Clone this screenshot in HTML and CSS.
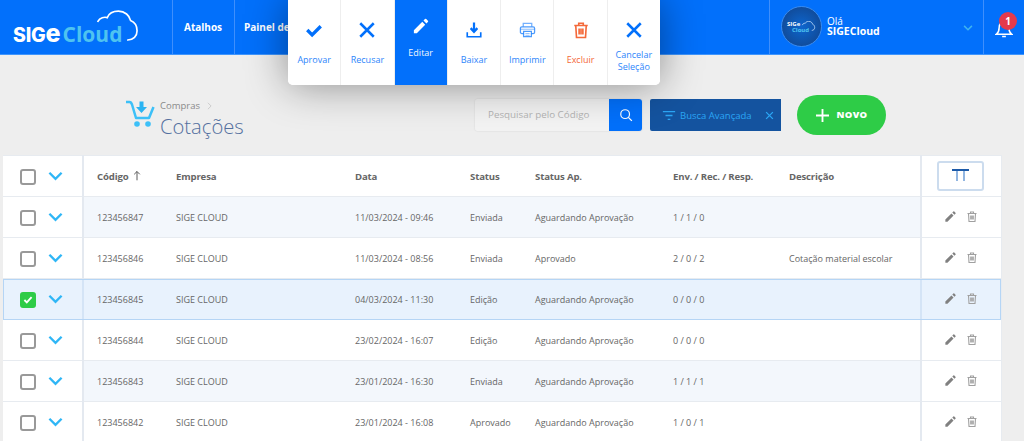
FILE: index.html
```html
<!DOCTYPE html>
<html lang="pt-BR">
<head>
<meta charset="utf-8">
<title>Cotações</title>
<link rel="stylesheet" href="styles.css">
</head>
<body>
<svg class="defs" width="0" height="0" aria-hidden="true">
  <symbol id="i-pencil" viewBox="0 0 24 24"><path d="M2.500 17.600V21.500h3.900L17.600 10.300l-3.900-3.900zM19.200 8.700l2-2a1.200 1.200 0 0 0 0-1.700l-2.200-2.200a1.200 1.200 0 0 0-1.700 0l-2 2z" fill="currentColor"/></symbol>
  <symbol id="i-trash" viewBox="0 0 24 24"><path d="M3 6h18M9 6V3h6V6M5 6l1 16h12L19 6M9.500 10v8M12 10v8M14.500 10v8" fill="none" stroke="currentColor" stroke-width="2.200"/></symbol>
  <symbol id="i-x" viewBox="0 0 24 24"><path d="M3 3l18 18M21 3L3 21" fill="none" stroke="currentColor" stroke-width="3.400"/></symbol>
  <symbol id="i-chev" viewBox="0 0 16 10"><path d="M1.500 1.500L8 8l6.500-6.500" fill="none" stroke="currentColor" stroke-width="2.500"/></symbol>
</svg>

<header class="topbar">
  <div class="logo">
    <span class="logo-sig">SIG</span><span class="logo-e">e</span><span class="logo-cloud">Cloud</span>
    <svg class="logo-arc" viewBox="0 0 44 34"><path d="M1 12C3 8 8 7 11 8 13 3 18 1 23 1c7 0 12 5 13 10 5 2 7 6 7 11 0 6-4 10-10 10" fill="none" stroke="#fff" stroke-width="1.800" stroke-linecap="round"/></svg>
  </div>
  <nav class="nav">
    <a class="nav-item">Atalhos</a>
    <a class="nav-item">Painel de Controle</a>
  </nav>
  <div class="user">
    <div class="avatar">
      <span class="av-a">SIGe</span><span class="av-b">Cloud</span>
      <svg class="av-arc" viewBox="0 0 44 34"><path d="M1 14C3 8 8 7 11 8 13 3 18 1 23 1c7 0 12 5 13 10 5 2 7 6 7 11 0 6-4 10-10 10" fill="none" stroke="#cfe6ff" stroke-width="2.500"/></svg>
    </div>
    <div class="user-text"><span class="hello">Olá</span><strong class="uname">SIGECloud</strong></div>
    <svg class="user-chev"><use href="#i-chev"/></svg>
  </div>
  <div class="bell">
    <svg class="bell-ico" viewBox="0 0 24 24"><path d="M2 19.500h20c-2.500-2-3.500-3.500-3.500-8.500 0-4.500-2.500-7.500-6.500-7.500S5.500 6.500 5.500 11c0 5-1 6.500-3.500 8.500zM9.500 22.500h5" fill="none" stroke="#fff" stroke-width="2"/></svg>
    <span class="badge">1</span>
  </div>
</header>

<div class="actions">
  <button class="act"><svg class="act-ico" viewBox="0 0 24 24"><path d="M3 12l6.500 6.500L21 7" fill="none" stroke="currentColor" stroke-width="4.500"/></svg><span>Aprovar</span></button>
  <button class="act"><svg class="act-ico"><use href="#i-x"/></svg><span>Recusar</span></button>
  <button class="act act-on"><svg class="act-ico"><use href="#i-pencil"/></svg><span>Editar</span></button>
  <button class="act"><svg class="act-ico" viewBox="0 0 24 24"><path d="M12 2v11M7.500 9.500L12 14.500l4.500-5" fill="none" stroke="currentColor" stroke-width="3"/><path d="M3 15v6h18v-6" fill="none" stroke="currentColor" stroke-width="2.200"/></svg><span>Baixar</span></button>
  <button class="act"><svg class="act-ico act-print" viewBox="0 0 24 24"><path d="M6 7V2.500h12V7" fill="none" stroke="#0270fb" stroke-opacity=".55" stroke-width="1.800"/><rect x="2" y="7.500" width="20" height="9.500" rx="2" fill="none" stroke="#0270fb" stroke-opacity=".7" stroke-width="1.800"/><path d="M2.500 11h19" stroke="#0270fb" stroke-opacity=".45" stroke-width="1.500"/><path d="M6.500 14v7.500h11V14z" fill="#fff" stroke="#0270fb" stroke-opacity=".7" stroke-width="1.800"/><path d="M9 17h6M9 19.500h6" stroke="#0270fb" stroke-opacity=".6"/></svg><span>Imprimir</span></button>
  <button class="act act-del"><svg class="act-ico"><use href="#i-trash"/></svg><span>Excluir</span></button>
  <button class="act"><svg class="act-ico"><use href="#i-x"/></svg><span>Cancelar<br>Seleção</span></button>
</div>

<main class="page">
  <section class="toolbar">
    <div class="crumbs">
      <svg class="cart" viewBox="0 0 30 28"><path d="M1 2h3.500c1.500 0 2 1 2.500 2.500L11 18h13l4.500-11" fill="none" stroke="#3cc0f8" stroke-width="2.500" stroke-linejoin="round"/><path d="M14.500 1.500h4V7h3.500l-5.500 6-5.500-6h3.500z" fill="#2bb4f2"/><circle cx="12" cy="24" r="2.800" fill="#3cc0f8"/><circle cx="23" cy="24" r="2.800" fill="#3cc0f8"/></svg>
      <div class="crumb-text">
        <div class="crumb-top">Compras <svg class="crumb-chev" viewBox="0 0 6 10"><path d="M1 1l4 4-4 4" fill="none" stroke="#c4c4c4"/></svg></div>
        <h1 class="title">Cotações</h1>
      </div>
    </div>
    <div class="search">
      <span class="search-input">Pesquisar pelo Código</span>
      <span class="search-btn"><svg viewBox="0 0 24 24"><circle cx="10.500" cy="10.500" r="7.500" fill="none" stroke="#fff" stroke-width="2"/><path d="M16 16l6 6" stroke="#fff" stroke-width="2.200"/></svg></span>
    </div>
    <div class="adv">
      <svg class="adv-filter" viewBox="0 0 16 12"><path d="M1 1.500h14M4 6h8M6.500 10.500h3" stroke="#2ba6f5" stroke-width="1.500"/></svg>
      <span class="adv-label">Busca Avançada</span>
      <svg class="adv-x"><use href="#i-x"/></svg>
    </div>
    <button class="new"><svg class="new-plus" viewBox="0 0 14 14"><path d="M7 0v14M0 7h14" stroke="#fff" stroke-width="2"/></svg><span>NOVO</span></button>
  </section>

  <table class="grid">
    <colgroup><col class="c0"><col class="c1"><col class="c2"><col class="c3"><col class="c4"><col class="c5"><col class="c6"><col class="c7"><col class="c8"></colgroup>
    <thead>
      <tr>
        <th class="sel"><div class="sel-in"><span class="chk"></span><svg class="chev"><use href="#i-chev"/></svg></div></th>
        <th class="first">Código <svg class="sort" viewBox="0 0 10 12"><path d="M5 12V1M1.500 4.500L5 1l3.500 3.500" fill="none" stroke="#555" stroke-width="1.200"/></svg></th>
        <th>Empresa</th><th>Data</th><th>Status</th><th>Status Ap.</th><th>Env. / Rec. / Resp.</th><th>Descrição</th>
        <th class="tools"><span class="cols"><svg viewBox="0 0 17 12"><path d="M0 1h17" stroke="#1c5aa8" stroke-width="2"/><path d="M5 2v10M12 2v10" stroke="#6f9fd8" stroke-width="1.500"/></svg></span></th>
      </tr>
    </thead>
    <tbody>
      <tr class="alt">
        <td class="sel"><div class="sel-in"><span class="chk"></span><svg class="chev"><use href="#i-chev"/></svg></div></td>
        <td class="first">123456847</td><td>SIGE CLOUD</td><td>11/03/2024 - 09:46</td><td>Enviada</td><td>Aguardando Aprovação</td><td>1 / 1 / 0</td><td></td>
        <td class="tools"><div class="row-ico"><svg class="ed"><use href="#i-pencil"/></svg><svg class="del"><use href="#i-trash"/></svg></div></td>
      </tr>
      <tr>
        <td class="sel"><div class="sel-in"><span class="chk"></span><svg class="chev"><use href="#i-chev"/></svg></div></td>
        <td class="first">123456846</td><td>SIGE CLOUD</td><td>11/03/2024 - 08:56</td><td>Enviada</td><td>Aprovado</td><td>2 / 0 / 2</td><td>Cotação material escolar</td>
        <td class="tools"><div class="row-ico"><svg class="ed"><use href="#i-pencil"/></svg><svg class="del"><use href="#i-trash"/></svg></div></td>
      </tr>
      <tr class="on">
        <td class="sel"><div class="sel-in"><span class="chk chk-on"><svg viewBox="0 0 12 10"><path d="M1.500 5l3 3 6-6.500" fill="none" stroke="#fff" stroke-width="2.300"/></svg></span><svg class="chev"><use href="#i-chev"/></svg></div></td>
        <td class="first">123456845</td><td>SIGE CLOUD</td><td>04/03/2024 - 11:30</td><td>Edição</td><td>Aguardando Aprovação</td><td>0 / 0 / 0</td><td></td>
        <td class="tools"><div class="row-ico"><svg class="ed"><use href="#i-pencil"/></svg><svg class="del"><use href="#i-trash"/></svg></div></td>
      </tr>
      <tr>
        <td class="sel"><div class="sel-in"><span class="chk"></span><svg class="chev"><use href="#i-chev"/></svg></div></td>
        <td class="first">123456844</td><td>SIGE CLOUD</td><td>23/02/2024 - 16:07</td><td>Edição</td><td>Aguardando Aprovação</td><td>0 / 0 / 0</td><td></td>
        <td class="tools"><div class="row-ico"><svg class="ed"><use href="#i-pencil"/></svg><svg class="del"><use href="#i-trash"/></svg></div></td>
      </tr>
      <tr class="alt">
        <td class="sel"><div class="sel-in"><span class="chk"></span><svg class="chev"><use href="#i-chev"/></svg></div></td>
        <td class="first">123456843</td><td>SIGE CLOUD</td><td>23/01/2024 - 16:30</td><td>Enviada</td><td>Aguardando Aprovação</td><td>1 / 1 / 1</td><td></td>
        <td class="tools"><div class="row-ico"><svg class="ed"><use href="#i-pencil"/></svg><svg class="del"><use href="#i-trash"/></svg></div></td>
      </tr>
      <tr>
        <td class="sel"><div class="sel-in"><span class="chk"></span><svg class="chev"><use href="#i-chev"/></svg></div></td>
        <td class="first">123456842</td><td>SIGE CLOUD</td><td>23/01/2024 - 16:08</td><td>Aprovado</td><td>Aguardando Aprovação</td><td>1 / 0 / 1</td><td></td>
        <td class="tools"><div class="row-ico"><svg class="ed"><use href="#i-pencil"/></svg><svg class="del"><use href="#i-trash"/></svg></div></td>
      </tr>
    </tbody>
  </table>
</main>
</body>
</html>
```

FILE: styles.css
```css
* { box-sizing: border-box; }
html, body { margin: 0; height: 441px; overflow: hidden; }
body { background: #eee; font-family: "Open Sans", "Liberation Sans", sans-serif; position: relative; color: #555; }
.defs { position: absolute; }

.topbar { height: 55px; background: #0270fb; border-bottom: 1px solid #3f95fc; display: flex; align-items: stretch; color: #fff; }
.logo { width: 172px; position: relative; padding: 20px 0 0 13px; line-height: 27px; white-space: nowrap; flex: none; }
.logo-sig { font: 800 19.500px/27px Inter, sans-serif; letter-spacing: -.2px; color: #fff; }
.logo-e { font: 800 25px/27px Inter, sans-serif; color: #fff; }
.logo-cloud { font: 700 21px/27px "Open Sans", sans-serif; color: #4ec3f0; margin-left: 2px; }
.logo-arc { position: absolute; left: 97px; top: 10px; width: 41px; height: 32px; }
.nav { display: flex; flex: 1; }
.nav-item { border-left: 1px solid #3f8ffc; padding: 20px 11px 0; font-size: 10px; line-height: 14px; font-weight: 700; height: 54px; width: 62px; white-space: nowrap; }
.nav-item + .nav-item { width: auto; padding-left: 9px; }
.user { width: 214px; flex: none; display: flex; align-items: flex-start; padding: 6px 0 0 11px; position: relative; border-left: 1px solid #3f8ffc; height: 54px; }
.avatar { width: 41px; height: 41px; border-radius: 50%; background: radial-gradient(circle, #0d66cf 0, #124287 100%); border: 1px solid #3a8bee; display: flex; flex-direction: column; justify-content: center; font-weight: 700; line-height: 6px; position: relative; flex: none; }
.av-a { font-size: 6px; color: #fff; margin-left: 5px; }
.av-b { font-size: 6px; color: #4ec3f0; margin-left: 10px; }
.av-arc { position: absolute; left: 19px; top: 14px; width: 15px; height: 10px; }
.user-text { margin-left: 5px; padding-top: 10px; display: flex; flex-direction: column; font-size: 10px; line-height: 10px; }
.hello { font-weight: 400; }
.uname { font-size: 10.500px; font-weight: 700; }
.user-chev { position: absolute; left: 193px; top: 25px; width: 10px; height: 6px; color: #3fb4f0; }
.bell { flex: none; width: 41px; border-left: 1px solid #3f8ffc; height: 54px; position: relative; }
.bell-ico { position: absolute; left: 11px; top: 19px; width: 18px; height: 19px; }
.badge { position: absolute; left: 15px; top: 12px; width: 18px; height: 18px; border-radius: 50%; background: #e53a4b; color: #fff; font-size: 10px; font-weight: 700; line-height: 18px; text-align: center; }

.actions { position: absolute; left: 288px; top: 0; width: 372px; height: 85px; background: #fff; border-radius: 0 0 5px 5px; box-shadow: 0 0 42px rgba(0,0,0,.42); display: flex; z-index: 5; overflow: hidden; }
.act { flex: 1 1 0; min-width: 0; border: 0; border-left: 1px solid #eee; background: #fff; color: #0270fb; font: 400 9px/12px "Open Sans", sans-serif; padding: 21px 0 0; display: flex; flex-direction: column; align-items: center; }
.act:first-child { border-left: 0; }
.act span { margin-top: 15px; opacity: .85; }
.act-ico { width: 18px; height: 18px; flex: none; }
.act-on { background: #0270fb; color: #fff; padding-top: 17px; }
.act-on span { margin-top: 12px; opacity: .95; }
.act-del { color: #f4693a; }
.act-del span { opacity: 1; }
.act:last-child span { margin-top: 10px; }
.act-print { width: 17px; }

.page { padding: 0 0 0 3px; }
.toolbar { height: 100px; position: relative; display: flex; align-items: flex-start; padding: 44px 0 0 122px; }
.crumbs { display: flex; width: 350px; flex: none; }
.cart { width: 30px; height: 28px; flex: none; margin-top: 1px; }
.crumb-text { margin-left: 5px; padding-top: 1px; }
.crumb-top { font-size: 9.500px; line-height: 12px; color: #8a8a8a; display: flex; align-items: center; gap: 7px; }
.crumb-chev { width: 5px; height: 8px; }
.title { margin: 1px 0 0; font-size: 20.200px; line-height: 27px; font-weight: 300; color: #54709f; }
.search { display: flex; height: 32px; width: 167px; box-shadow: 0 0 2px rgba(0,0,0,.12); border-radius: 3px; flex: none; }
.search-input { flex: 1; background: #f3f3f3; border-radius: 3px 0 0 3px; font-size: 9.800px; line-height: 32px; padding-left: 13px; color: #b4b4b4; }
.search-btn { width: 33px; background: #0270fb; border-radius: 0 3px 3px 0; display: flex; align-items: center; justify-content: center; }
.search-btn svg { width: 14px; height: 14px; }
.adv { margin-left: 8px; width: 131px; height: 32px; background: #14539f; border-radius: 2px 0 0 2px; display: flex; align-items: center; color: #2ba6f5; font-size: 9.500px; padding-left: 12px; flex: none; }
.adv-filter { width: 14px; height: 11px; flex: none; }
.adv-label { margin-left: 4px; white-space: nowrap; }
.adv-x { width: 9px; height: 9px; margin-left: 13px; flex: none; }
.new { margin: -4px 0 0 16px; width: 89px; height: 40px; border: 0; border-radius: 20px; background: #2ecc47; color: #fff; font: 800 9.500px/14px "Open Sans", sans-serif; letter-spacing: .3px; display: flex; align-items: center; justify-content: center; gap: 8px; padding: 0; flex: none; }
.new-plus { width: 13px; height: 13px; }

.grid { width: 998px; table-layout: fixed; border-collapse: collapse; background: #fff; font-size: 9px; }
.c0, .c8 { width: 80px; }
.c1 { width: 79px; } .c2 { width: 179px; } .c3 { width: 115px; } .c4 { width: 65px; } .c5 { width: 138px; } .c6 { width: 116px; } .c7 { width: 146px; }
.grid tr { height: 41px; }
.grid th { text-align: left; font-size: 9.600px; letter-spacing: -.15px; font-weight: 700; color: #666; padding: 0 0 0 14px; white-space: nowrap; }
.grid td { padding: 0 0 0 14px; color: #666; white-space: nowrap; }
.grid th.first, .grid td.first { padding-left: 13px; }
.grid thead tr, .grid tbody tr { border: 1px solid #e7ebf0; border-width: 1px 1px 1px 0; }
.grid tr { border-left: 1px solid #e7ebf0; }
.grid th.sel, .grid td.sel { padding: 0; border-right: 2px solid #e4e9f0; background: #fff; }
.grid th.tools, .grid td.tools { padding: 0; border-left: 2px solid #e4e9f0; background: #fff; }
.sel-in { display: flex; align-items: center; padding-left: 17px; gap: 12px; }
.chk { width: 16px; height: 16px; border: 2px solid #999; border-radius: 3px; background: #fff; display: block; flex: none; margin-top: 2px; }
.chk-on { background: #2ecc47; border-color: #2ecc47; display: flex; align-items: center; justify-content: center; }
.chk-on svg { width: 10px; height: 8px; }
.chev { width: 15px; height: 10px; color: #2fb6f6; flex: none; margin-top: -1px; }
.sort { width: 8px; height: 11px; margin-left: 2px; vertical-align: -1px; }
.cols { display: flex; width: 47px; height: 30px; margin-left: 15px; border: 2px solid #ccdcee; border-radius: 3px; align-items: center; justify-content: center; }
.cols svg { width: 17px; height: 12px; margin-top: -3px; }
.row-ico { display: flex; justify-content: center; align-items: center; gap: 9px; margin-top: -1px; }
.ed { width: 13px; height: 13px; color: #808080; }
.del { width: 12px; height: 13px; color: #a0a0a0; }
.grid tr.alt td:not(.sel):not(.tools) { background: #f3f7fc; }
.grid tr.on { outline: 1px solid #b5d5f5; outline-offset: -1px; }
.grid tr.on td, .grid tr.on td.sel, .grid tr.on td.tools { background: #e8f2fd; }
.grid tr.on td.sel { border-right-color: #d4e4f6; }
.grid tr.on td.tools { border-left-color: #d4e4f6; }
```
